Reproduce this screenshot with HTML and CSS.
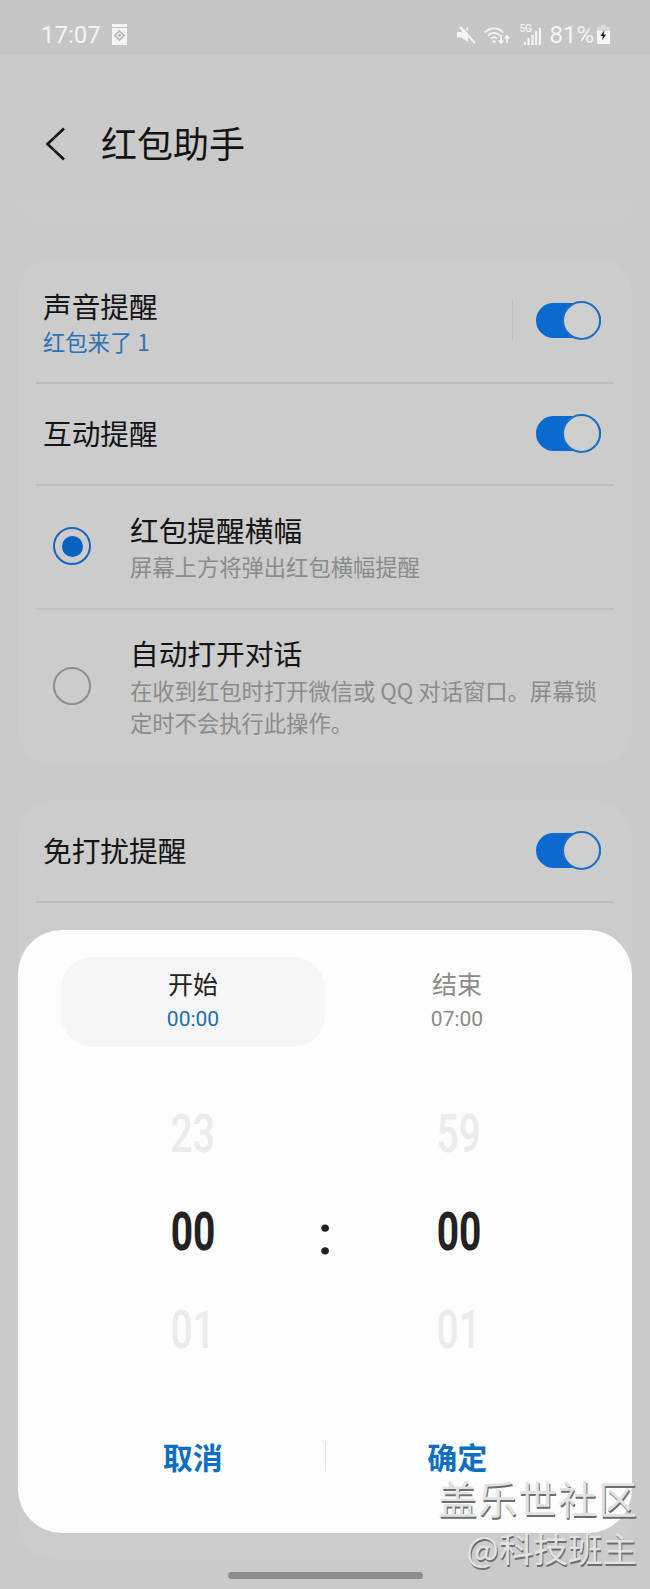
FILE: index.html
```html
<!DOCTYPE html>
<html lang="zh-CN">
<head>
<meta charset="utf-8">
<title>红包助手</title>
<link rel="stylesheet" href="styles.css">
</head>
<body>
<div class="screen">
  <header class="status">
    <span class="clock">17:07</span>
    <svg class="ic-widget" width="15" height="21" viewBox="0 0 15 21"><path fill="#f4f4f4" d="M0 0h15v21H0z"/><path fill="#c6c6c6" d="M0 3h15v1H0z"/><path fill="none" stroke="#b5b5b5" stroke-width="1.6" d="M7.500 7l4.500 4.500-4.500 4.500-4.500-4.500z"/><circle cx="7.500" cy="11.500" r="1.400" fill="#b5b5b5"/></svg>
    <span class="status-gap"></span>
    <svg class="ic-mute" width="18" height="18" viewBox="0 0 18 18"><path fill="#f4f4f4" d="M0 6h4l7-5v15L4 11.500H0z"/><path stroke="#f4f4f4" stroke-width="2.400" d="M3 1l15 16"/><path stroke="#c6c6c6" stroke-width="1.200" d="M5.500 0.500l12.500 13.500"/></svg>
    <svg class="ic-wifi" width="26" height="18" viewBox="0 0 26 18"><g fill="none" stroke="#f4f4f4" stroke-width="1.800"><path d="M1 6.500C6 1 14 1 19 6.500"/><path d="M4 9.500C7.500 6 12.500 6 16 9.500"/><path d="M7 12.500C8.800 10.800 11.200 10.800 13 12.500"/></g><circle cx="10" cy="15.500" r="1.600" fill="#f4f4f4"/><path stroke="#f4f4f4" stroke-width="1.600" fill="none" d="M17 9v8M14.800 14.500l2.200 2.500 2.200-2.500M23 17v-7M20.800 12.500L23 10l2.200 2.500"/></svg>
    <span class="ic-signal">
      <span class="five-g">5G</span>
      <svg width="17" height="18" viewBox="0 0 17 18"><path fill="#f4f4f4" d="M0 15h2v3H0zM3.500 11h2.200v7H3.500zM7.500 8h2.200v10H7.500zM11 4h2.200v14H11zM14.800 1h2.200v17h-2.200z"/></svg>
    </span>
    <span class="battery-pct">81%</span>
    <svg class="ic-battery" width="13" height="19" viewBox="0 0 13 19"><path fill="#dadada" d="M4 0h5v2h3a1 1 0 0 1 1 1v3H0V3a1 1 0 0 1 1-1h3z"/><path fill="#f6f6f6" d="M0 6h13v12a1 1 0 0 1-1 1H1a1 1 0 0 1-1-1z"/><path fill="#111" d="M7.500 5L3.500 11h2.500l-1 4.500 4-6H6.500z"/></svg>
  </header>

  <div class="appbar">
    <svg class="ic-back" width="21" height="34" viewBox="0 0 21 34"><path fill="none" stroke="#151515" stroke-width="2.600" d="M19 1.500L2.500 17 19 32.500"/></svg>
    <h1 class="title">红包助手</h1>
  </div>

  <div class="stub"></div>

  <section class="card card-main">
    <div class="row row-sound">
      <div class="row-text">
        <div class="label">声音提醒</div>
        <div class="sub-blue">红包来了 1</div>
      </div>
      <span class="vline"></span>
      <span class="switch"><span class="knob"></span></span>
    </div>
    <div class="row row-inter">
      <div class="label">互动提醒</div>
      <span class="switch"><span class="knob"></span></span>
    </div>
    <div class="row row-radio row-banner">
      <span class="radio on"><span class="dot"></span></span>
      <div class="row-text">
        <div class="label">红包提醒横幅</div>
        <div class="desc">屏幕上方将弹出红包横幅提醒</div>
      </div>
    </div>
    <div class="row row-radio row-open">
      <span class="radio"></span>
      <div class="row-text">
        <div class="label">自动打开对话</div>
        <div class="desc">在收到红包时打开微信或 QQ 对话窗口。屏幕锁定时不会执行此操作。</div>
      </div>
    </div>
  </section>

  <section class="card card-dnd">
    <div class="row row-inter">
      <div class="label">免打扰提醒</div>
      <span class="switch"><span class="knob"></span></span>
    </div>
  </section>

  <div class="sheet">
    <div class="tabs">
      <div class="tab active">
        <div class="tab-name">开始</div>
        <div class="tab-time">00:00</div>
      </div>
      <div class="tab">
        <div class="tab-name">结束</div>
        <div class="tab-time">07:00</div>
      </div>
    </div>
    <div class="picker">
      <div class="wheel">
        <span class="num faint">23</span>
        <span class="num">00</span>
        <span class="num faint">01</span>
      </div>
      <div class="colon">:</div>
      <div class="wheel wheel-right">
        <span class="num faint">59</span>
        <span class="num">00</span>
        <span class="num faint">01</span>
      </div>
    </div>
    <div class="actions">
      <button class="action">取消</button>
      <span class="action-line"></span>
      <button class="action">确定</button>
    </div>
  </div>

  <div class="home-bar"></div>

  <div class="watermark">
    <div class="wm-one">盖乐世社区</div>
    <div class="wm-two">@科技班主</div>
  </div>
</div>
</body>
</html>
```

FILE: styles.css
```css
* { box-sizing: border-box; }
html, body { margin: 0; padding: 0; }
body {
  width: 650px;
  height: 1589px;
  overflow: hidden;
  background: #c9c9c9;
  font-family: "Noto Sans CJK SC", Roboto, sans-serif;
}
.screen {
  position: relative;
  width: 650px;
  height: 1589px;
  overflow: hidden;
  background: #cacaca;
}

/* status bar */
.status {
  height: 55px;
  padding: 14px 40px 0 41px;
  display: flex;
  align-items: center;
  background: #c6c6c6;
  color: #f4f4f4;
  font-family: Roboto, sans-serif;
}
.clock { font-size: 24px; font-weight: 400; }
.ic-widget { margin-left: 11px; }
.status-gap { flex: 1; }
.ic-wifi { margin-left: 9px; }
.ic-signal {
  position: relative;
  width: 22px;
  height: 20px;
  margin-left: 9px;
  display: flex;
  justify-content: flex-end;
  align-items: flex-end;
}
.five-g {
  position: absolute;
  left: 0;
  top: -1px;
  font-size: 10px;
  font-weight: 500;
  line-height: 10px;
}
.battery-pct { margin-left: 8px; font-size: 24px; font-weight: 400; }
.ic-battery { margin-left: 3px; }

/* app bar */
.appbar {
  height: 145px;
  padding: 0 0 0 45px;
  display: flex;
  align-items: center;
  gap: 35px;
}
.ic-back { margin-top: 32px; }
.title {
  margin: 28px 0 0;
  font-size: 36px;
  line-height: 40px;
  font-weight: 400;
  color: #131313;
}

/* cards */
.stub {
  height: 22px;
  margin: 0 18px;
  background: #cbcbcb;
  border-radius: 0 0 24px 24px;
}
.card {
  margin: 36px 18px 0;
  padding: 0 18px;
  background: #cccccc;
  border-radius: 36px;
}
.card-main { height: 507px; }
.card-dnd { height: 758px; }
.row {
  display: flex;
  align-items: center;
  padding: 0 13px 0 7px;
  border-bottom: 2px solid #bcbcbc;
}
.row-sound { height: 126px; }
.row-sound .row-text { margin-top: 2px; }
.row-inter { height: 102px; justify-content: space-between; }
.row-inter .label { margin-bottom: 2px; }
.row-inter .switch { margin-bottom: 2px; }
.row-radio { padding-left: 17px; }
.row-banner { height: 124px; padding-bottom: 2px; border-bottom-color: #c0c0c0; }
.row-open { height: 155px; border-bottom: 0; padding-right: 14px; padding-bottom: 3px; }
.row-open .row-text { margin-top: -2px; }
.row-open .label { margin-bottom: 1px; }
.row-text { flex: 1; min-width: 0; }
.label {
  font-size: 28.700px;
  line-height: 40px;
  color: #141414;
}
.sub-blue {
  font-size: 22.300px;
  line-height: 30px;
  color: #2f72b4;
}
.desc {
  font-size: 22.300px;
  line-height: 32px;
  color: #8b8b8b;
}
.vline {
  width: 1px;
  height: 42px;
  margin-right: 23px;
  background: #bdbdbd;
}

/* switch */
.switch {
  position: relative;
  display: block;
  width: 65px;
  height: 35px;
  background: #0a6ad0;
  border-radius: 18px;
}
.knob {
  position: absolute;
  right: 0;
  top: -2px;
  width: 39px;
  height: 39px;
  background: #cecece;
  border: 2px solid #1b6fc6;
  border-radius: 50%;
}

/* radio */
.radio {
  flex: none;
  width: 38px;
  height: 38px;
  margin-right: 39px;
  display: flex;
  align-items: center;
  justify-content: center;
  border: 2px solid #8d8d8d;
  border-radius: 50%;
}
.radio.on { border: 2px solid #1b66b8; }
.dot {
  width: 21px;
  height: 21px;
  background: #0a62c0;
  border-radius: 50%;
}

/* bottom sheet */
.sheet {
  position: absolute;
  left: 18px;
  top: 930px;
  width: 614px;
  height: 603px;
  padding: 27px 43px 0;
  background: #fdfdfd;
  border-radius: 44px;
  display: flex;
  flex-direction: column;
}
.tabs { display: grid; grid-template-columns: 264px 264px; }
.tab {
  height: 90px;
  padding-bottom: 6px;
  border-radius: 32px;
  display: flex;
  flex-direction: column;
  align-items: center;
  justify-content: center;
  color: #8a8a8a;
}
.tab.active { background: #f6f6f6; color: #222; }
.tab-name { font-size: 25px; line-height: 34px; }
.tab-time {
  margin-top: 5px;
  font-family: Roboto, sans-serif;
  font-size: 21px;
  line-height: 28px;
}
.tab.active .tab-time { color: #1a6fb0; }

.picker {
  height: 320px;
  margin-top: 25px;
  display: flex;
  align-items: center;
}
.wheel {
  width: 264px;
  display: flex;
  flex-direction: column;
  align-items: center;
  gap: 44px;
}
.wheel-right { padding-left: 4px; }
.num {
  display: block;
  height: 54px;
  font-family: Roboto, sans-serif;
  font-size: 54px;
  line-height: 54px;
  font-weight: 700;
  color: #222;
  transform: scaleX(.72);
}
.num.faint { font-weight: 500; color: #ebebeb; }
.colon {
  width: 0;
  display: flex;
  justify-content: center;
  font-family: Roboto, sans-serif;
  font-size: 56px;
  line-height: 56px;
  font-weight: 500;
  color: #222;
  margin-top: 6px;
}

.actions {
  display: grid;
  grid-template-columns: 1fr 1px 1fr;
  align-items: center;
  margin-top: 49px;
  height: 30px;
}
.action {
  padding: 0;
  background: none;
  border: 0;
  font-family: inherit;
  font-size: 30px;
  line-height: 30px;
  font-weight: 700;
  color: #0e6fc2;
}
.action-line { height: 29px; background: #e6e6e6; }

/* home indicator */
.home-bar {
  position: absolute;
  left: 228px;
  top: 1572px;
  width: 195px;
  height: 7px;
  background: #8c8c8c;
  border-radius: 4px;
}

/* watermark */
.watermark {
  position: absolute;
  right: 13px;
  top: 1475px;
  text-align: right;
  color: #e2e2e2;
  text-shadow: 1px 2px 0 #6e6e6e;
}
.wm-one { font-size: 39px; line-height: 44px; letter-spacing: 1px; margin-right: -1px; }
.wm-two { margin-top: 8px; font-size: 34.500px; line-height: 40px; }
```
